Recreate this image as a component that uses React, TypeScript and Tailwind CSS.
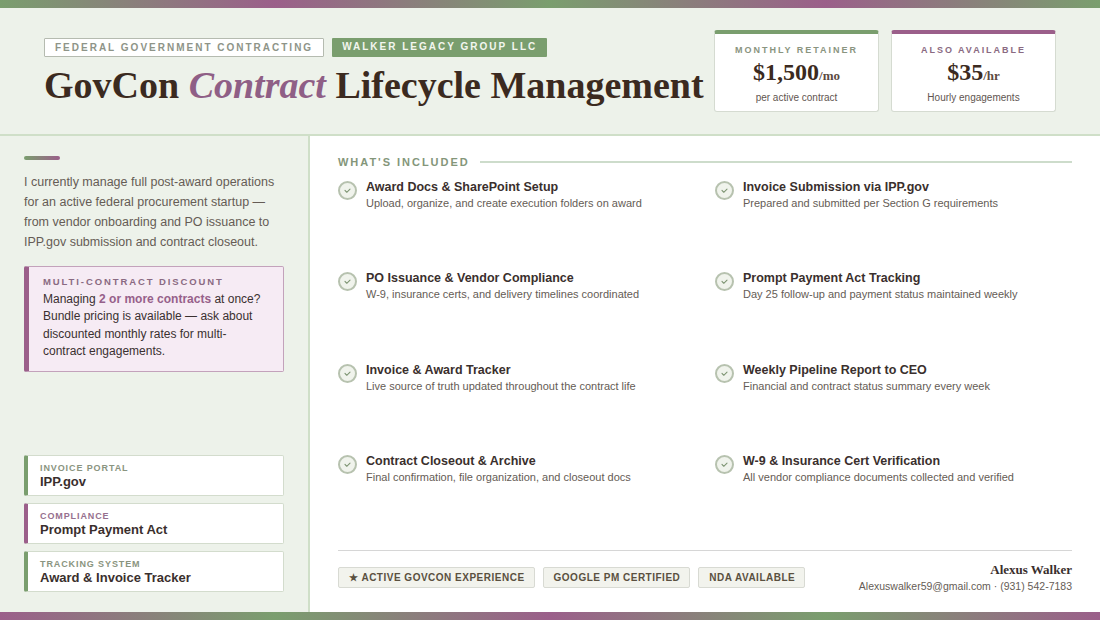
const INCLUDED = [
  ["Award Docs & SharePoint Setup", "Upload, organize, and create execution folders on award"],
  ["Invoice Submission via IPP.gov", "Prepared and submitted per Section G requirements"],
  ["PO Issuance & Vendor Compliance", "W-9, insurance certs, and delivery timelines coordinated"],
  ["Prompt Payment Act Tracking", "Day 25 follow-up and payment status maintained weekly"],
  ["Invoice & Award Tracker", "Live source of truth updated throughout the contract life"],
  ["Weekly Pipeline Report to CEO", "Financial and contract status summary every week"],
  ["Contract Closeout & Archive", "Final confirmation, file organization, and closeout docs"],
  ["W-9 & Insurance Cert Verification", "All vendor compliance documents collected and verified"],
];

const SERIF = "font-['Liberation_Serif',serif]";

function Check() {
  return (
    <div className="mt-[2px] flex h-[19px] w-[19px] shrink-0 items-center justify-center rounded-full border-2 border-[#b7c2af] bg-[#f0f3ec]">
      <svg viewBox="0 0 10 10" className="h-[9px] w-[9px]" fill="none" stroke="#7d9472" strokeWidth={1.2}>
        <path d="M2.2 4.8l2 2.2 3.6-3.6" strokeLinecap="round" strokeLinejoin="round" />
      </svg>
    </div>
  );
}

function PriceCard({ label, price, unit, note, bar, labelColor }: { label: string; price: string; unit: string; note: string; bar: string; labelColor: string }) {
  return (
    <div className={`flex h-[82px] w-[165px] flex-col items-center rounded-[3px] border border-[#d5dbd1] border-t-[4px] bg-white pt-[10px] ${bar}`}>
      <div className={`text-[9px] leading-[12px] font-bold tracking-[0.22em] ${labelColor}`}>{label}</div>
      <div className={`${SERIF} mt-[2px] text-[24px] leading-[28px] font-bold text-[#3b2a20]`}>
        {price}
        <span className="text-[13px] text-[#5c4a3f]">{unit}</span>
      </div>
      <div className="mt-[1px] text-[10px] leading-[14px] text-[#5f5550]">{note}</div>
    </div>
  );
}

function RefCard({ label, value, bar, labelColor }: { label: string; value: string; bar: string; labelColor: string }) {
  return (
    <div className={`flex h-[41px] flex-col justify-center rounded-[2px] border border-[#d3dccd] border-l-[4px] bg-white pl-[12px] ${bar}`}>
      <div className={`text-[9px] leading-[12px] font-bold tracking-[0.1em] ${labelColor}`}>{label}</div>
      <div className="text-[13px] leading-[15px] font-bold text-[#3a2f2d]">{value}</div>
    </div>
  );
}

function Pill({ children }: { children: React.ReactNode }) {
  return (
    <div className="flex h-[21px] items-center rounded-[2px] border border-[#d8dad3] bg-[#f2f3ed] pr-[9px] pl-[10px] text-[10px] font-bold tracking-[0.05em] text-[#5a5040]">
      {children}
    </div>
  );
}

export default function App() {
  return (
    <div className="flex h-[620px] w-[1100px] flex-col overflow-hidden bg-white font-['Liberation_Sans',sans-serif]">
      <div className="h-2 shrink-0 bg-[linear-gradient(90deg,#7a9e6e,#9b5f8a,#7a9e6e,#9b5f8a,#7a9e6e)]" />

      {/* Header */}
      <div className="flex h-[128px] shrink-0 items-start justify-between border-b-2 border-[#cfdfc8] bg-[#edf2ea] pr-[44px] pl-[44px]">
        <div className="pt-[30px]">
          <div className="flex gap-2">
            <div className="flex h-[19px] items-center rounded-[1px] border border-[#b5bbb0] bg-white px-[10px] text-[10px] font-bold tracking-[0.2em] text-[#8e9488]">
              FEDERAL GOVERNMENT CONTRACTING
            </div>
            <div className="flex h-[19px] items-center rounded-[1px] bg-[#7a9e6e] px-[10px] pb-[2px] text-[10px] font-bold tracking-[0.2em] text-[#f3f6ef]">
              WALKER LEGACY GROUP LLC
            </div>
          </div>
          <h1 className={`${SERIF} mt-[6px] whitespace-nowrap text-[38px] leading-[44px] font-bold text-[#3b2a20]`}>
            GovCon <em className="font-bold text-[#8f5f86]">Contract</em> Lifecycle Management
          </h1>
        </div>
        <div className="flex gap-3 pt-[22px]">
          <PriceCard label="MONTHLY RETAINER" price="$1,500" unit="/mo" note="per active contract" bar="border-t-[#7a9e6e]" labelColor="text-[#8a9480]" />
          <PriceCard label="ALSO AVAILABLE" price="$35" unit="/hr" note="Hourly engagements" bar="border-t-[#9b5f8a]" labelColor="text-[#8a6a82]" />
        </div>
      </div>

      <div className="flex min-h-0 flex-1">
        {/* Sidebar */}
        <div className="flex w-[310px] shrink-0 flex-col justify-between border-r-2 border-[#cfdfc8] bg-[#edf2ea] pt-[20px] pr-[24px] pb-[20px] pl-[24px]">
          <div>
            <div className="h-1 w-9 rounded-full bg-[linear-gradient(90deg,#7a9e6e,#9b5f8a)]" />
            <p className="mt-[12px] text-[12.5px] leading-[20px] text-[#655c55]">
              I currently manage full post-award operations for an active federal procurement startup — from vendor onboarding and PO issuance to IPP.gov submission and contract closeout.
            </p>
            <div className="mt-[14px] h-[106px] rounded-[2px] border border-[#c3a2bb] border-l-[5px] border-l-[#9b5f8a] bg-[#f6ebf4] pt-[9px] pl-[14px]">
              <div className="text-[9.5px] leading-[11px] font-bold tracking-[0.2em] text-[#8a6a82]">MULTI-CONTRACT DISCOUNT</div>
              <p className="mt-[4px] text-[12px] leading-[17.4px] text-[#3a3030]">
                Managing <strong className="text-[#96608a]">2 or more contracts</strong> at once?
                <br />
                Bundle pricing is available — ask about
                <br />
                discounted monthly rates for multi-
                <br />
                contract engagements.
              </p>
            </div>
          </div>
          <div className="flex flex-col gap-[7px]">
            <RefCard label="INVOICE PORTAL" value="IPP.gov" bar="border-l-[#7a9e6e]" labelColor="text-[#8a9480]" />
            <RefCard label="COMPLIANCE" value="Prompt Payment Act" bar="border-l-[#9b5f8a]" labelColor="text-[#96708e]" />
            <RefCard label="TRACKING SYSTEM" value="Award & Invoice Tracker" bar="border-l-[#7a9e6e]" labelColor="text-[#8a9480]" />
          </div>
        </div>

        {/* Main */}
        <div className="flex min-w-0 flex-1 flex-col pt-[20px] pr-[28px] pl-[28px]">
          <div className="flex items-center gap-[10px]">
            <div className="text-[11px] leading-[13px] font-bold tracking-[0.18em] text-[#84967a]">WHAT'S INCLUDED</div>
            <div className="mb-[2px] h-[2px] flex-1 bg-[#cddccb]" />
          </div>
          <div className="mt-[10px] grid h-[371px] grid-cols-2 content-start gap-x-[20px]">
            {INCLUDED.map(([title, desc]) => (
              <div key={title} className="flex h-[91.4px] gap-[9px]">
                <Check />
                <div>
                  <div className="text-[12.5px] leading-[16px] font-bold text-[#3a2f2d]">{title}</div>
                  <div className="text-[11px] leading-[16px] text-[#655c55]">{desc}</div>
                </div>
              </div>
            ))}
          </div>
          <div className="flex h-[62px] items-start justify-between border-t border-[#d6d6d6] pt-[11px]">
            <div className="mt-[5px] flex gap-2">
              <Pill>★ ACTIVE GOVCON EXPERIENCE</Pill>
              <Pill>GOOGLE PM CERTIFIED</Pill>
              <Pill>NDA AVAILABLE</Pill>
            </div>
            <div className="text-right">
              <div className={`${SERIF} text-[13px] leading-[16px] font-bold text-[#3a2f2d]`}>Alexus Walker</div>
              <div className="mt-[1px] text-[10.5px] leading-[15px] text-[#655c55]">Alexuswalker59@gmail.com · (931) 542-7183</div>
            </div>
          </div>
        </div>
      </div>

      <div className="h-2 shrink-0 bg-[linear-gradient(90deg,#9b5f8a,#7a9e6e,#9b5f8a,#7a9e6e,#9b5f8a)]" />
    </div>
  );
}
